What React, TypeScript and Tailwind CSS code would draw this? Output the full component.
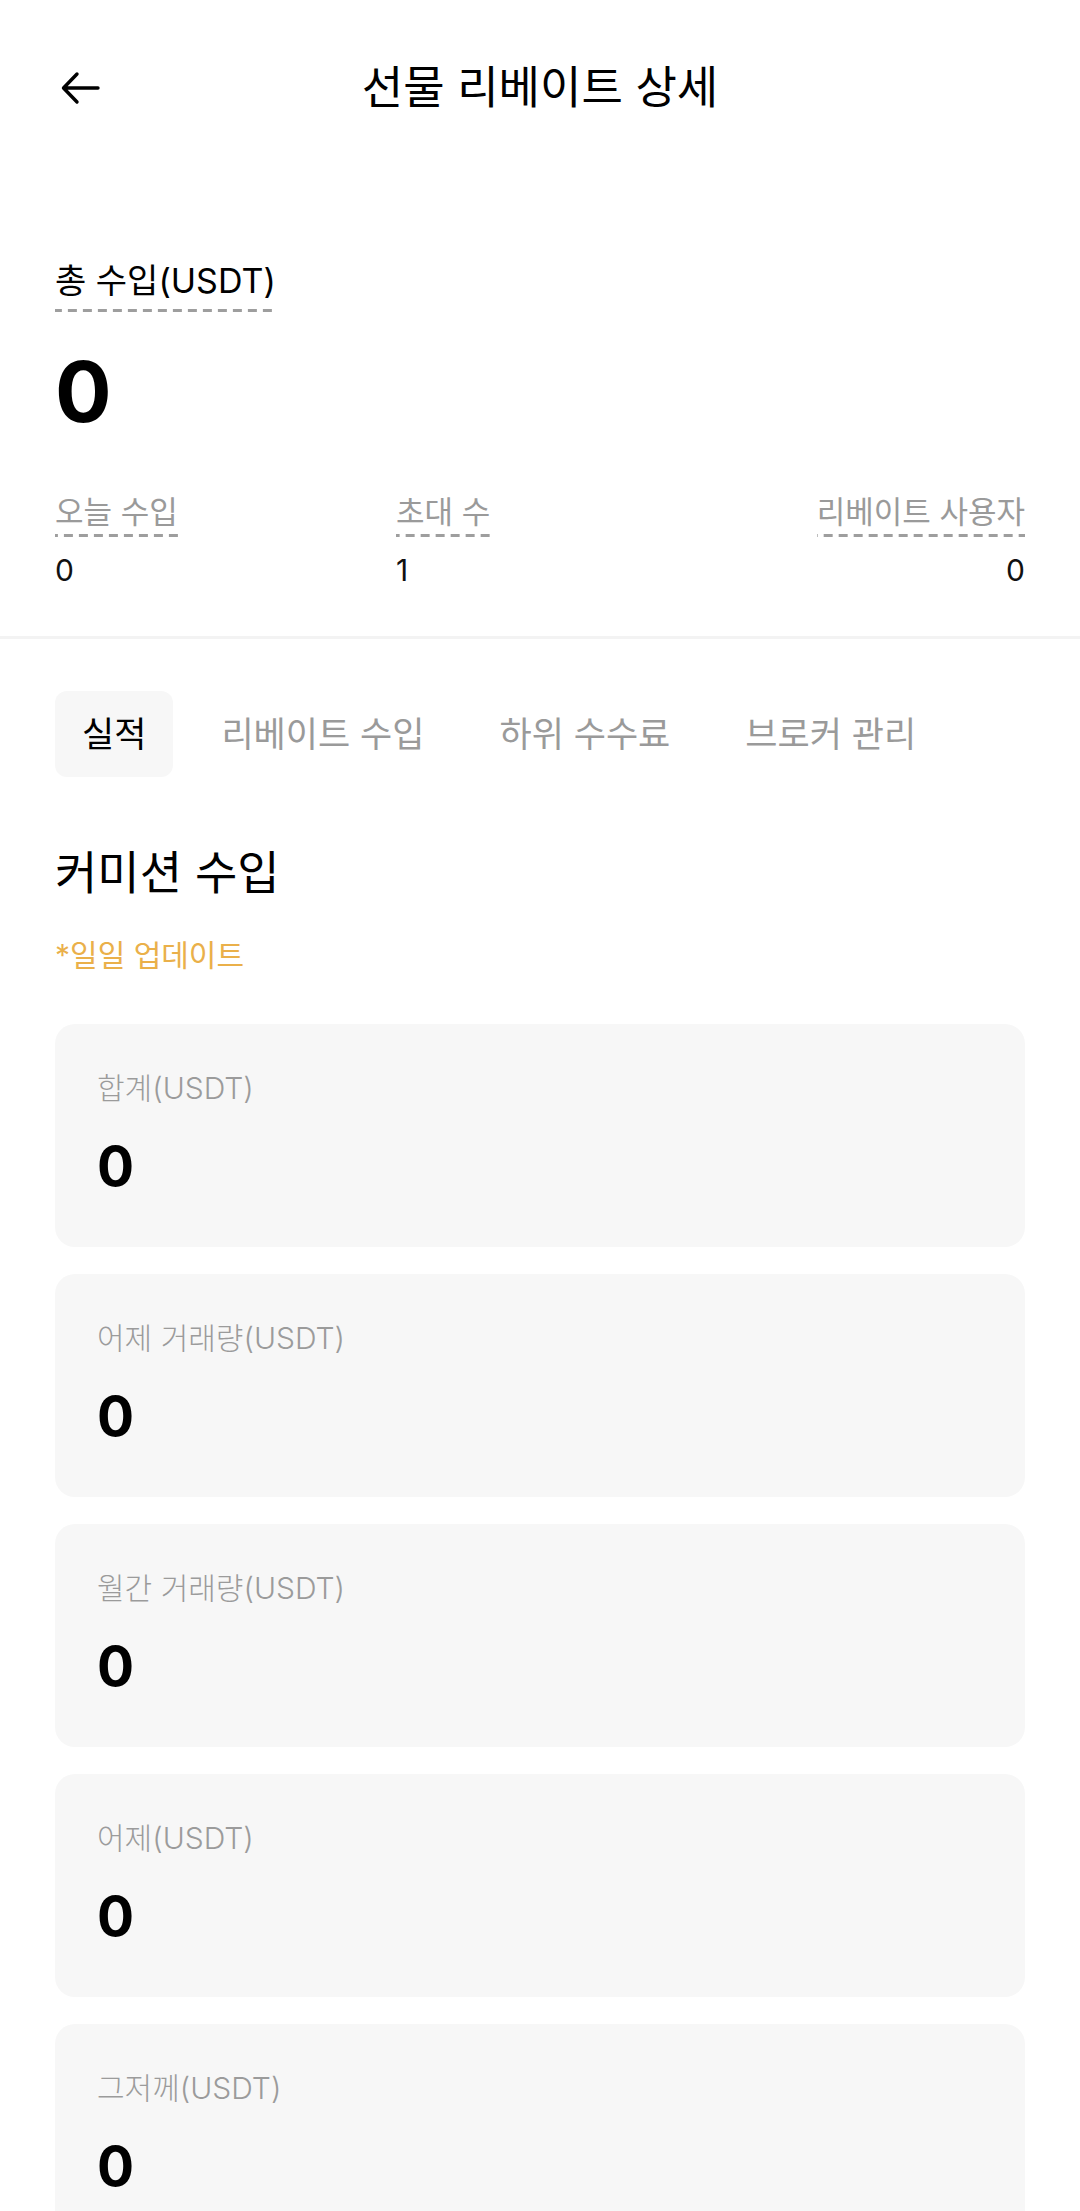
import React from "react";

const font = "font-['Inter','Noto_Sans_CJK_KR',sans-serif]";

// dashed underline drawn as a repeating gradient
const dashed =
  "bg-[linear-gradient(to_right,#9e9e9e_60%,transparent_60%)] bg-[length:15px_3px] bg-repeat-x bg-bottom";

const stats = [
  { label: "오늘 수입", value: "0", align: "left" },
  { label: "초대 수", value: "1", align: "left" },
  { label: "리베이트 사용자", value: "0", align: "right" },
];

const tabs = ["실적", "리베이트 수입", "하위 수수료", "브로커 관리"];

const cards = [
  "합계(USDT)",
  "어제 거래량(USDT)",
  "월간 거래량(USDT)",
  "어제(USDT)",
  "그저께(USDT)",
];

export default function App() {
  return (
    <div className={`${font} w-[1080px] h-[2211px] overflow-hidden bg-white text-black`}>
      {/* header */}
      <header className="grid grid-cols-[1fr_auto_1fr] items-center h-[176px] px-[55px]">
        <button className="w-[48px] h-[48px] flex items-center">
          <svg
            width="40"
            height="40"
            viewBox="0 0 40 40"
            fill="none"
            stroke="currentColor"
            strokeWidth="3.4"
            strokeLinecap="round"
            strokeLinejoin="round"
            className="ml-[5px]">
            <path d="M38 20H4M17 6L3.5 20L17 34" />
          </svg>
        </button>
        <h1 className="text-[45px] leading-[56px] font-normal">선물 리베이트 상세</h1>
        <div />
      </header>

      {/* summary */}
      <section className="px-[55px] mt-[85px]">
        <div>
          <span className={`inline-block text-[34px] leading-[40px] pb-[11px] ${dashed}`}>
            총 수입(USDT)
          </span>
        </div>
        <div className="mt-[38px] text-[84px] leading-none font-bold tracking-tight">0</div>

        <div className="grid grid-cols-[341px_1fr_auto] mt-[60px]">
          {stats.map((s) => (
            <div key={s.label} className={s.align === "right" ? "text-right" : ""}>
              <span
                className={`inline-block text-[31px] leading-[36px] pb-[7px] text-[#9a9a9a] ${dashed}`}>
                {s.label}
              </span>
              <div className="mt-[15px] text-[30px] leading-[36px] text-[#111]">{s.value}</div>
            </div>
          ))}
        </div>
      </section>

      <div className="mt-[48px] h-[3px] bg-[#f3f3f3]" />

      {/* tabs */}
      <nav className="flex gap-[21px] px-[55px] mt-[52px]">
        {tabs.map((t, i) => (
          <div
            key={t}
            className={
              i === 0
                ? "h-[86px] px-[27px] flex items-center rounded-[12px] bg-[#f7f7f7] text-[35px] text-black"
                : "h-[86px] px-[27px] flex items-center text-[35px] text-[#9a9a9a]"
            }>
            {t}
          </div>
        ))}
      </nav>

      {/* commission */}
      <section className="px-[55px]">
        <h2 className="mt-[69px] text-[46px] leading-[52px] font-normal">커미션 수입</h2>
        <p className="mt-[39px] text-[30px] leading-[36px] text-[#eab04a]">*일일 업데이트</p>

        <div className="mt-[51px] flex flex-col gap-[27px]">
          {cards.map((c) => (
            <div key={c} className="h-[223px] rounded-[20px] bg-[#f7f7f7] px-[42px] pt-[46px]">
              <div className="text-[30px] leading-[36px] font-light text-[#9b9b9b]">{c}</div>
              <div className="mt-[33px] text-[55px] leading-none font-bold">0</div>
            </div>
          ))}
        </div>
      </section>
    </div>
  );
}
